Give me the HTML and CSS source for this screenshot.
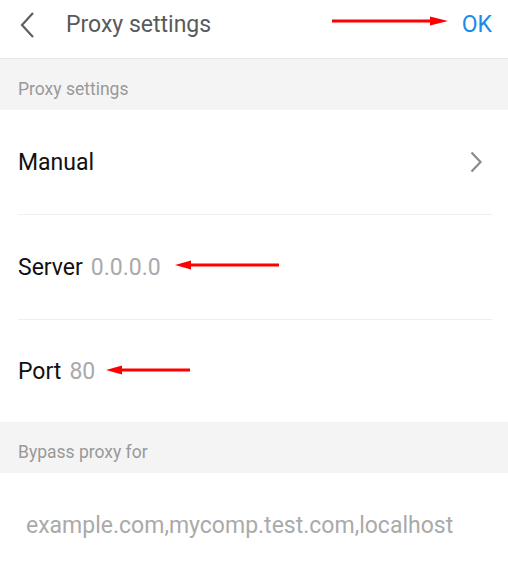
FILE: index.html
```html
<!DOCTYPE html>
<html lang="en">
<head>
    <meta charset="UTF-8">
    <meta name="viewport" content="width=device-width, initial-scale=1.0">
    <title>Proxy settings</title>
    <link rel="stylesheet" href="styles.css">
</head>
<body>
    <div class="page">
        <div class="header">
            <svg class="back" width="16" height="26" viewBox="0 0 16 26">
                <path d="M14 1 L3 13 L14 25" fill="none" stroke="#5f5f5f" stroke-width="2.2"/>
            </svg>
            <span class="title">Proxy settings</span>
            <span class="ok">OK</span>
        </div>

        <div class="section">Proxy settings</div>

        <div class="row">
            <span class="label">Manual</span>
            <svg class="chevron" width="12" height="22" viewBox="0 0 12 22">
                <path d="M1.5 1.5 L10.5 11 L1.5 20.5" fill="none" stroke="#8a8a8a" stroke-width="2.2"/>
            </svg>
        </div>
        <div class="row">
            <span class="label">Server</span>
            <span class="value">0.0.0.0</span>
        </div>
        <div class="row last">
            <span class="label">Port</span>
            <span class="value">80</span>
        </div>

        <div class="section">Bypass proxy for</div>

        <div class="bypass">example.com,mycomp.test.com,localhost</div>

        <!-- annotation arrows -->
        <svg class="arrow arrow-ok" width="116" height="12" viewBox="0 0 116 12">
            <line x1="0" y1="6" x2="100" y2="6" stroke="#f00" stroke-width="3"/>
            <polygon points="98,1.5 116,6 98,10.5" fill="#f00"/>
        </svg>
        <svg class="arrow arrow-server" width="104" height="12" viewBox="0 0 104 12">
            <polygon points="0,6 16,1.5 16,10.5" fill="#f00"/>
            <line x1="14" y1="6" x2="104" y2="6" stroke="#f00" stroke-width="3"/>
        </svg>
        <svg class="arrow arrow-port" width="84" height="12" viewBox="0 0 84 12">
            <polygon points="0,6 16,1.5 16,10.5" fill="#f00"/>
            <line x1="14" y1="6" x2="84" y2="6" stroke="#f00" stroke-width="3"/>
        </svg>
    </div>
</body>
</html>
```

FILE: styles.css
```css
body {
    margin: 0;
    padding: 0;
    background-color: #fff;
    font-family: Roboto, "Noto Sans", Arial, sans-serif;
}

.page {
    position: relative;
    width: 508px;
    height: 577px;
    overflow: hidden;
}

.header {
    display: flex;
    align-items: center;
    height: 59px;
    padding: 0 16px 9px 19px;
    box-sizing: border-box;
    border-bottom: 1px solid #e8e8e8;
}

.back {
    margin-right: 31px;
}

.title {
    flex: 1;
    font-size: 23px;
    color: #5a5a5a;
}

.ok {
    font-size: 23px;
    color: #1a8be6;
}

.section {
    height: 51px;
    line-height: 60px;
    padding-left: 18px;
    background-color: #f4f4f4;
    font-size: 17.5px;
    color: #999;
    box-sizing: border-box;
}

.row {
    display: flex;
    align-items: center;
    height: 105px;
    margin: 0 16px 0 18px;
    box-sizing: border-box;
    border-bottom: 1px solid #efefef;
    font-size: 23px;
}

.row.last {
    height: 102px;
    border-bottom: none;
}

.label {
    color: #111;
    flex: none;
}

.value {
    color: #aaa;
    margin-left: 8px;
}

.chevron {
    margin-left: auto;
    margin-right: 10px;
}

.bypass {
    padding: 39px 0 0 26px;
    font-size: 23px;
    color: #aaa;
}

.arrow {
    position: absolute;
}

.arrow-ok {
    left: 332px;
    top: 15px;
}

.arrow-server {
    left: 175px;
    top: 259px;
}

.arrow-port {
    left: 106px;
    top: 364px;
}
```
